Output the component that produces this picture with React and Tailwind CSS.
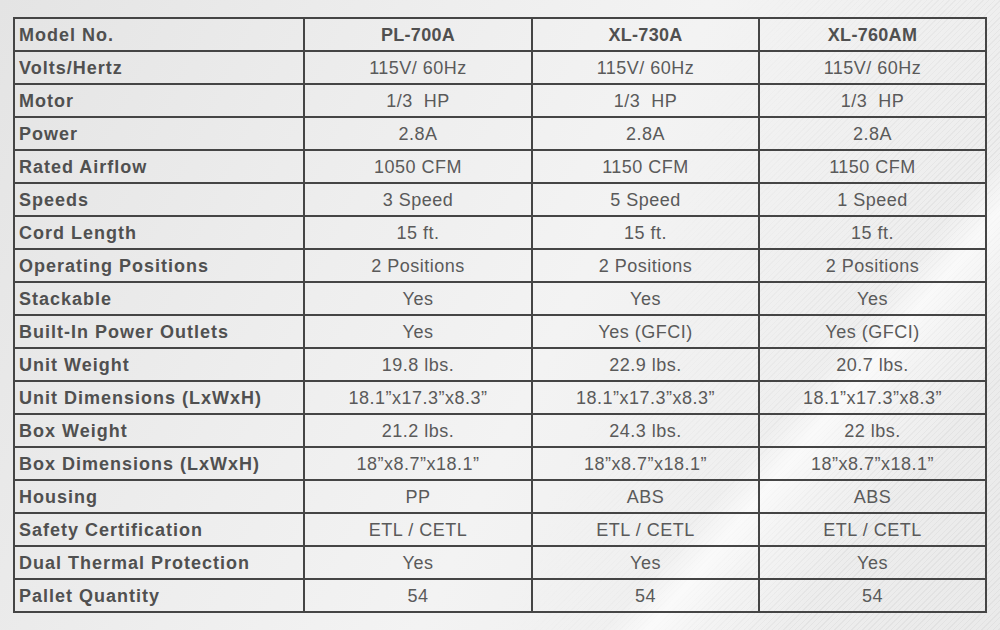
const rows = [
  ["Volts/Hertz", "115V/ 60Hz", "115V/ 60Hz", "115V/ 60Hz"],
  ["Motor", "1/3\u00a0 HP", "1/3\u00a0 HP", "1/3\u00a0 HP"],
  ["Power", "2.8A", "2.8A", "2.8A"],
  ["Rated Airflow", "1050 CFM", "1150 CFM", "1150 CFM"],
  ["Speeds", "3 Speed", "5 Speed", "1 Speed"],
  ["Cord Length", "15 ft.", "15 ft.", "15 ft."],
  ["Operating Positions", "2 Positions", "2 Positions", "2 Positions"],
  ["Stackable", "Yes", "Yes", "Yes"],
  ["Built-In Power Outlets", "Yes", "Yes (GFCI)", "Yes (GFCI)"],
  ["Unit Weight", "19.8 lbs.", "22.9 lbs.", "20.7 lbs."],
  ["Unit Dimensions (LxWxH)", "18.1\u201dx17.3\u201dx8.3\u201d", "18.1\u201dx17.3\u201dx8.3\u201d", "18.1\u201dx17.3\u201dx8.3\u201d"],
  ["Box Weight", "21.2 lbs.", "24.3 lbs.", "22 lbs."],
  ["Box Dimensions (LxWxH)", "18\u201dx8.7\u201dx18.1\u201d", "18\u201dx8.7\u201dx18.1\u201d", "18\u201dx8.7\u201dx18.1\u201d"],
  ["Housing", "PP", "ABS", "ABS"],
  ["Safety Certification", "ETL / CETL", "ETL / CETL", "ETL / CETL"],
  ["Dual Thermal Protection", "Yes", "Yes", "Yes"],
  ["Pallet Quantity", "54", "54", "54"],
];

export default function App() {
  return (
    <div
      className="relative w-[1000px] h-[630px] overflow-hidden bg-[linear-gradient(115deg,#e4e4e4_0%,#eeeeee_35%,#f3f3f3_55%,#eaeaea_100%)] pt-[17px] pl-[13px]"
      style={{ fontFamily: '"Liberation Sans", Arial, sans-serif' }}
    >
      <div className="pointer-events-none absolute inset-0 bg-[repeating-linear-gradient(135deg,rgba(255,255,255,0)_0px,rgba(255,255,255,0)_3px,rgba(200,200,200,0.25)_3px,rgba(200,200,200,0.25)_4px)] [mask-image:linear-gradient(110deg,transparent_60%,black_85%)]" />
      <div className="pointer-events-none absolute inset-0 bg-[linear-gradient(130deg,transparent_74%,rgba(255,255,255,0.7)_77%,rgba(255,255,255,0.35)_80%,transparent_86%)]" />
      <table className="relative border-collapse w-[972px] table-fixed text-[#555555]">
        <colgroup>
          <col className="w-[290px]" />
          <col className="w-[228px]" />
          <col className="w-[227px]" />
          <col className="w-[227px]" />
        </colgroup>
        <tbody>
          <tr className="h-[33px]">
            <td className="border-2 border-[#454545] pl-[4px] pt-[1px] text-[18px] font-bold tracking-[1px] leading-none text-[#505050]">Model No.</td>
            <td className="border-2 border-[#454545] text-center pt-[1px] text-[18px] font-bold tracking-[0.3px] leading-none text-[#505050]">PL-700A</td>
            <td className="border-2 border-[#454545] text-center pt-[1px] text-[18px] font-bold tracking-[0.3px] leading-none text-[#505050]">XL-730A</td>
            <td className="border-2 border-[#454545] text-center pt-[1px] text-[18px] font-bold tracking-[0.3px] leading-none text-[#505050]">XL-760AM</td>
          </tr>
          {rows.map((r) => (
            <tr key={r[0]} className="h-[33px]">
              <td className="border-2 border-[#454545] pl-[4px] pt-[1px] text-[18px] font-bold tracking-[1px] leading-none text-[#505050] whitespace-nowrap">{r[0]}</td>
              <td className="border-2 border-[#454545] text-center pt-[1px] text-[18px] tracking-[0.5px] leading-none text-[#5a5a5a] whitespace-pre">{r[1]}</td>
              <td className="border-2 border-[#454545] text-center pt-[1px] text-[18px] tracking-[0.5px] leading-none text-[#5a5a5a] whitespace-pre">{r[2]}</td>
              <td className="border-2 border-[#454545] text-center pt-[1px] text-[18px] tracking-[0.5px] leading-none text-[#5a5a5a] whitespace-pre">{r[3]}</td>
            </tr>
          ))}
        </tbody>
      </table>
    </div>
  );
}
